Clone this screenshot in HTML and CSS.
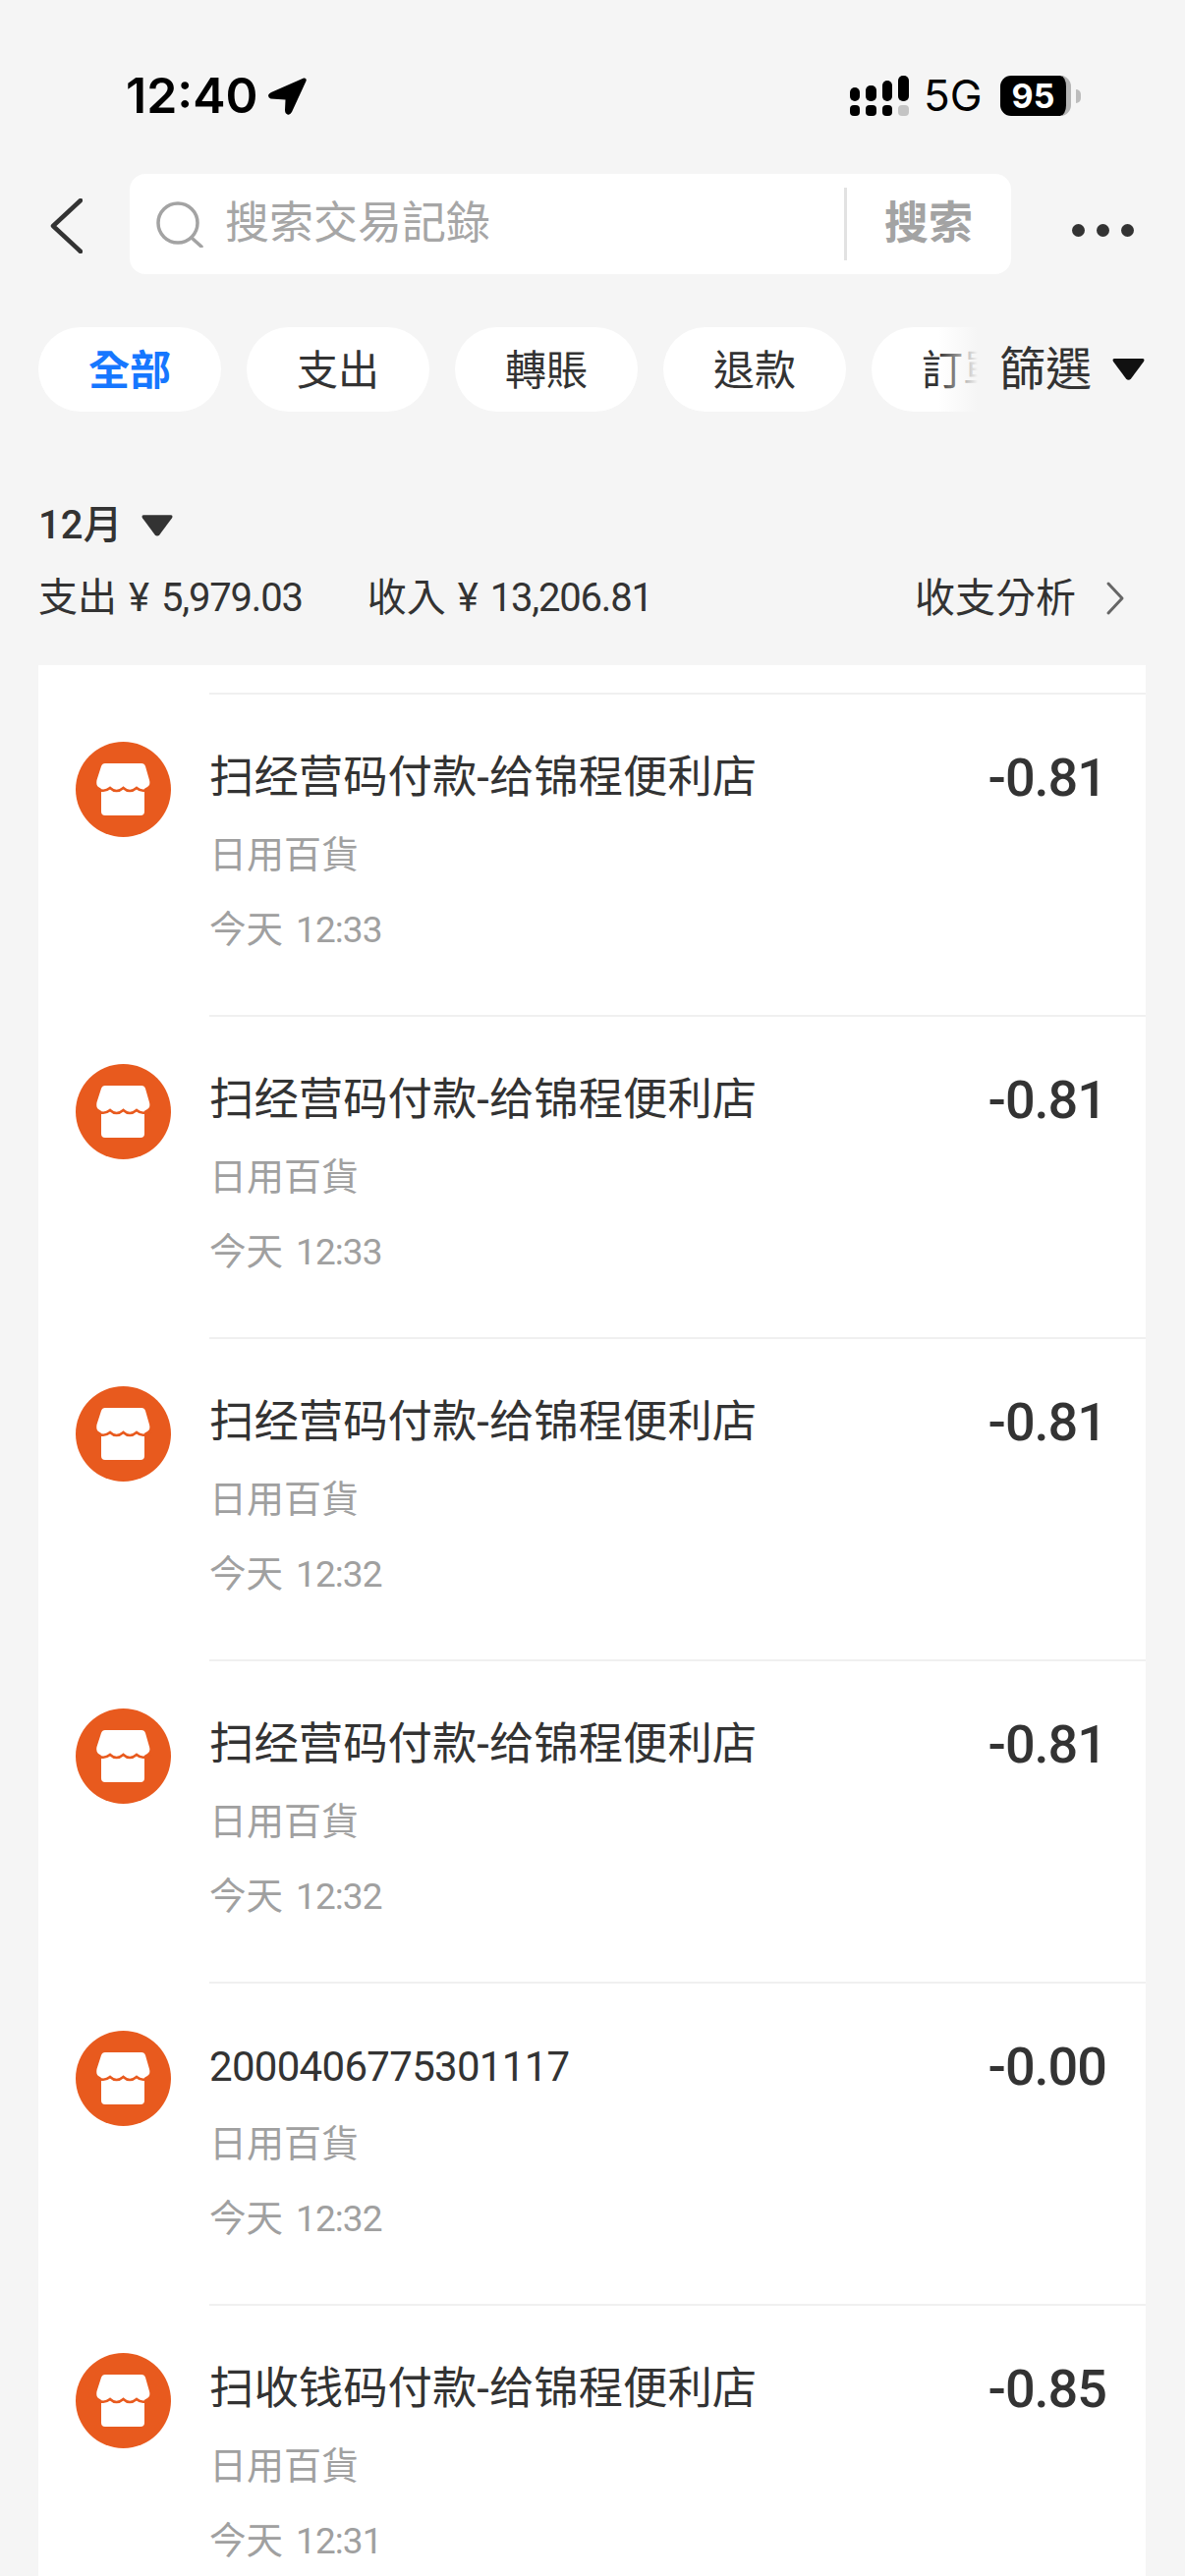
FILE: index.html
```html
<!DOCTYPE html>
<html lang="zh-Hant">
<head>
<meta charset="utf-8">
<title>交易記錄</title>
<link rel="stylesheet" href="styles.css">
</head>
<body>
<svg class="defs" width="0" height="0" aria-hidden="true">
  <symbol id="store" viewBox="0 0 97 97">
    <circle cx="48.5" cy="48.5" r="48.5" fill="#e85a1e"/>
    <path fill="#fff" d="M30 22H67Q70 22 71 25L75 39Q76.500 44 73 46Q70 47.500 70 48V71Q70 75 66 75H30Q26 75 26 71V48Q26 47.500 23 46Q20.500 44 21.500 39L26 25Q27 22 30 22Z"/>
    <path fill="none" stroke="#e85a1e" stroke-width="2.600" d="M20 46Q27.500 53 35 47Q41.500 53 48.500 47Q55 53 62 47Q69 53 77 46"/>
  </symbol>
</svg>
<main class="page">
  <header class="status">
    <div class="status-left">
      <span class="time">12:40</span>
      <svg class="loc" width="39" height="38" viewBox="0 0 39 38"><path fill="#000" d="M36 0.500Q39.500 0 38.500 3.500L24 35Q22 38.500 19.500 37.500Q17 36.500 17 33L17.500 22.500L2.500 21.500Q-0.500 20.500 0.200 17.500Q0.800 16 3 15Z"/></svg>
    </div>
    <div class="status-right">
      <div class="signal">
        <div class="sig-col"><i class="sig-top h14"></i><i class="sig-dot"></i></div>
        <div class="sig-col"><i class="sig-top h16"></i><i class="sig-dot"></i></div>
        <div class="sig-col"><i class="sig-top h21"></i><i class="sig-dot"></i></div>
        <div class="sig-col"><i class="sig-top h26"></i><i class="sig-dot off"></i></div>
      </div>
      <span class="net">5G</span>
      <div class="battery"><span class="batt-num">95</span></div>
      <i class="batt-tip"></i>
    </div>
  </header>

  <section class="search-row">
    <svg class="back" width="33" height="56" viewBox="0 0 33 56"><path d="M31 2L3 28L31 54" fill="none" stroke="#333" stroke-width="4.500" stroke-linecap="round" stroke-linejoin="round"/></svg>
    <div class="search-box">
      <svg class="search-icon" width="48" height="47" viewBox="0 0 48 47"><circle cx="22" cy="22" r="20" fill="none" stroke="#a3a3a3" stroke-width="3.500"/><path d="M36 37L46 46" stroke="#a3a3a3" stroke-width="3.500" stroke-linecap="round"/></svg>
      <span class="placeholder">搜索交易記錄</span>
      <i class="search-sep"></i>
      <span class="search-btn">搜索</span>
    </div>
    <div class="more"><i></i><i></i><i></i></div>
  </section>

  <nav class="chips-wrap">
    <div class="chips">
      <span class="chip active">全部</span>
      <span class="chip">支出</span>
      <span class="chip">轉賬</span>
      <span class="chip">退款</span>
      <span class="chip">訂單</span>
    </div>
    <div class="filter">
      <span class="filter-text">篩選</span>
      <svg width="33" height="22" viewBox="0 0 33 22"><path d="M2.500 0H30.500Q33.500 0 32 3L19 20.500Q16.500 23 14 20.500L1 3Q-0.500 0 2.500 0Z" fill="#111"/></svg>
    </div>
  </nav>

  <section class="month">
    <span class="month-text">12月</span>
    <svg width="32" height="22" viewBox="0 0 33 22"><path d="M2.500 0H30.500Q33.500 0 32 3L19 20.500Q16.500 23 14 20.500L1 3Q-0.500 0 2.500 0Z" fill="#333"/></svg>
  </section>

  <section class="summary">
    <span class="sum-item">支出<span class="yen">¥</span><span class="sum-num">5,979.03</span></span>
    <span class="sum-item">收入<span class="yen">¥</span><span class="sum-num">13,206.81</span></span>
    <span class="analysis">收支分析
      <svg width="20" height="36" viewBox="0 0 20 36"><path d="M3 3L17 18L3 33" fill="none" stroke="#666" stroke-width="3" stroke-linecap="round" stroke-linejoin="round"/></svg>
    </span>
  </section>

  <section class="card">
    <article class="row">
      <svg class="row-icon" width="97" height="97"><use href="#store"/></svg>
      <div class="row-body">
        <div class="row-text"><div class="row-title">扫经营码付款-给锦程便利店</div><div class="row-cat">日用百貨</div><div class="row-time">今天<span class="time-num">12:33</span></div></div>
        <div class="row-amount">-0.81</div>
      </div>
    </article>
    <article class="row">
      <svg class="row-icon" width="97" height="97"><use href="#store"/></svg>
      <div class="row-body">
        <div class="row-text"><div class="row-title">扫经营码付款-给锦程便利店</div><div class="row-cat">日用百貨</div><div class="row-time">今天<span class="time-num">12:33</span></div></div>
        <div class="row-amount">-0.81</div>
      </div>
    </article>
    <article class="row">
      <svg class="row-icon" width="97" height="97"><use href="#store"/></svg>
      <div class="row-body">
        <div class="row-text"><div class="row-title">扫经营码付款-给锦程便利店</div><div class="row-cat">日用百貨</div><div class="row-time">今天<span class="time-num">12:32</span></div></div>
        <div class="row-amount">-0.81</div>
      </div>
    </article>
    <article class="row">
      <svg class="row-icon" width="97" height="97"><use href="#store"/></svg>
      <div class="row-body">
        <div class="row-text"><div class="row-title">扫经营码付款-给锦程便利店</div><div class="row-cat">日用百貨</div><div class="row-time">今天<span class="time-num">12:32</span></div></div>
        <div class="row-amount">-0.81</div>
      </div>
    </article>
    <article class="row">
      <svg class="row-icon" width="97" height="97"><use href="#store"/></svg>
      <div class="row-body">
        <div class="row-text"><div class="row-title row-title-num">2000406775301117</div><div class="row-cat">日用百貨</div><div class="row-time">今天<span class="time-num">12:32</span></div></div>
        <div class="row-amount">-0.00</div>
      </div>
    </article>
    <article class="row">
      <svg class="row-icon" width="97" height="97"><use href="#store"/></svg>
      <div class="row-body">
        <div class="row-text"><div class="row-title">扫收钱码付款-给锦程便利店</div><div class="row-cat">日用百貨</div><div class="row-time">今天<span class="time-num">12:31</span></div></div>
        <div class="row-amount">-0.85</div>
      </div>
    </article>
  </section>
</main>
</body>
</html>
```
FILE: styles.css
```css
* { box-sizing: border-box; }
html, body { margin: 0; padding: 0; }
body { background: #f5f5f5; font-family: Roboto, "Noto Sans CJK SC", sans-serif; color: #333; }
.defs { display: block; height: 0; }
i { display: block; }
.page { width: 1206px; height: 2622px; overflow: hidden; background: #f5f5f5; }

.status { height: 177px; padding: 77px 106px 0 128px; display: flex; justify-content: space-between; align-items: flex-start; }
.status-left { display: flex; align-items: center; gap: 10px; height: 41px; }
.time { font-family: Inter, sans-serif; font-size: 50px; font-weight: 600; color: #000; line-height: 43px; }
.status-right { display: flex; align-items: center; height: 41px; }
.signal { display: flex; gap: 6px; }
.sig-col { display: flex; flex-direction: column; justify-content: flex-end; gap: 4px; width: 10.500px; height: 41px; }
.sig-top { background: #000; border-radius: 5px; }
.h14 { height: 14px; }
.h16 { height: 16px; }
.h21 { height: 21px; }
.h26 { height: 26px; }
.sig-dot { height: 11px; background: #000; border-radius: 4px; }
.sig-dot.off { background: #c4c4c4; }
.net { font-family: Inter, sans-serif; font-size: 44px; font-weight: 400; color: #000; margin-left: 15px; line-height: 41px; }
.battery { width: 72px; height: 41px; margin-left: 18.500px; background: #000; border-radius: 11px; border-right: 5px solid #b5b5b5; display: flex; align-items: center; justify-content: center; }
.batt-num { font-family: Inter, sans-serif; font-size: 34px; font-weight: 700; color: #fff; line-height: 1; }
.batt-tip { width: 5px; height: 14px; margin-left: 5px; background: #bdbdbd; border-radius: 0 7px 7px 0; }

.search-row { height: 102px; display: flex; align-items: center; padding-left: 51px; }
.back { flex: none; margin-top: 3px; }
.search-box { width: 897px; height: 102px; margin-left: 48px; background: #fff; border-radius: 16px; display: flex; align-items: center; padding-left: 27px; }
.search-icon { flex: none; }
.placeholder { font-size: 45px; color: #a6a6a6; margin-left: 22px; width: 630px; line-height: 60px; flex: none; }
.search-sep { width: 3px; height: 74px; background: #e2e2e2; flex: none; }
.search-btn { font-size: 45px; font-weight: 700; color: #a3a3a3; margin-left: 38px; line-height: 60px; flex: none; }
.more { display: flex; gap: 12px; margin-left: 62px; margin-top: 12px; }
.more i { width: 13px; height: 13px; border-radius: 50%; background: #333; }

.chips-wrap { position: relative; height: 86px; margin-top: 54px; overflow: hidden; }
.chips { display: flex; gap: 26px; padding-left: 39px; width: 1300px; }
.chip { width: 186px; height: 86px; border-radius: 43px; background: #fff; font-size: 42px; line-height: 89px; text-align: center; flex: none; color: #333; }
.chip.active { color: #1677ff; font-weight: 700; }
.filter { position: absolute; top: 0; right: 0; width: 211px; height: 86px; background: #f5f5f5; display: flex; align-items: center; padding-left: 22px; gap: 21px; }
.filter::before { content: ""; position: absolute; left: -40px; top: 0; width: 40px; height: 86px; background: linear-gradient(to right, rgba(245,245,245,0), #f5f5f5); }
.filter-text { font-size: 47px; color: #333; line-height: 60px; }

.month { display: flex; align-items: center; gap: 20px; height: 48px; margin-top: 92px; padding-left: 39px; }
.month-text { font-size: 40px; font-weight: 500; color: #333; line-height: 48px; }

.summary { display: flex; align-items: center; height: 50px; margin-top: 25px; padding: 0 61px 0 39px; }
.sum-item { font-size: 40px; color: #333; line-height: 50px; margin-right: 66px; white-space: nowrap; }
.yen { margin: 0 12px; }
.sum-num { letter-spacing: -1.200px; }
.analysis { margin-left: auto; display: flex; align-items: center; gap: 30px; font-size: 41px; color: #333; line-height: 50px; }

.card { margin: 43px 40px 0 39px; padding-top: 28px; background: #fff; }
.row { display: flex; height: 328px; }
.row-icon { flex: none; margin: 50px 39px 0 38px; }
.row-body { flex: 1; display: flex; justify-content: space-between; align-items: flex-start; border-top: 2px solid #f0f0f0; padding: 55px 40px 0 0; }
.row-title { font-size: 45.400px; line-height: 60px; color: #333; }
.row-title-num { font-size: 42px; letter-spacing: -0.700px; }
.row-cat { font-size: 38px; line-height: 60px; color: #a0a0a0; margin-top: 18px; }
.row-time { font-size: 37.500px; line-height: 60px; color: #a0a0a0; margin-top: 16px; }
.time-num { font-size: 37px; letter-spacing: -0.900px; margin-left: 13px; }
.row-amount { font-size: 54px; font-weight: 500; line-height: 60px; color: #333; letter-spacing: -1px; }
```
